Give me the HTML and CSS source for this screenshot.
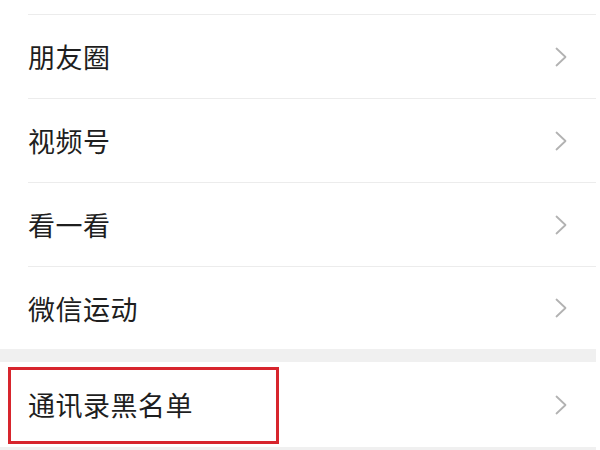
FILE: index.html
```html
<!DOCTYPE html>
<html lang="zh-CN">
<head>
<meta charset="utf-8">
<link rel="stylesheet" href="styles.css">
</head>
<body>
<div class="page">
  <div class="list">
    <div class="stub"></div>
    <div class="row"><span class="label">朋友圈</span><svg class="chev" viewBox="0 0 12 20"><polyline points="1.5,1.5 10.5,10 1.5,18.5"/></svg></div>
    <div class="row"><span class="label">视频号</span><svg class="chev" viewBox="0 0 12 20"><polyline points="1.5,1.5 10.5,10 1.5,18.5"/></svg></div>
    <div class="row"><span class="label">看一看</span><svg class="chev" viewBox="0 0 12 20"><polyline points="1.5,1.5 10.5,10 1.5,18.5"/></svg></div>
    <div class="row last"><span class="label">微信运动</span><svg class="chev" viewBox="0 0 12 20"><polyline points="1.5,1.5 10.5,10 1.5,18.5"/></svg></div>
  </div>
  <div class="band"></div>
  <div class="list single">
    <div class="row solo"><span class="label">通讯录黑名单</span><svg class="chev" viewBox="0 0 12 20"><polyline points="1.5,1.5 10.5,10 1.5,18.5"/></svg></div>
    <div class="highlight"></div>
  </div>
  <div class="band bottom"></div>
</div>
</body>
</html>
```
FILE: styles.css
```css
html, body {
  margin: 0;
  padding: 0;
  background: #ffffff;
}
.page {
  width: 596px;
  height: 450px;
  overflow: hidden;
  font-family: "Noto Sans CJK SC", "Noto Sans", sans-serif;
}
.list {
  background: #ffffff;
}
.stub {
  height: 14px;
}
.row {
  margin-left: 28px;
  height: 83px;
  border-top: 1px solid #ececec;
  display: flex;
  align-items: center;
  justify-content: space-between;
  padding-right: 29px;
}
.row.last {
  height: 82px;
}
.row.solo {
  border-top: none;
  height: 85px;
}
.label {
  font-size: 27px;
  color: #1e1e1e;
  letter-spacing: 0.5px;
}
.chev {
  width: 12px;
  height: 20px;
  fill: none;
  stroke: #b2b2b2;
  stroke-width: 1.8;
  stroke-linecap: round;
  stroke-linejoin: round;
}
.band {
  height: 13px;
  background: #f0f0f0;
}
.band.bottom {
  height: 4px;
}
.single {
  position: relative;
}
.highlight {
  position: absolute;
  left: 8px;
  top: 5px;
  width: 265px;
  height: 71px;
  border: 3px solid #d7252d;
}
```
